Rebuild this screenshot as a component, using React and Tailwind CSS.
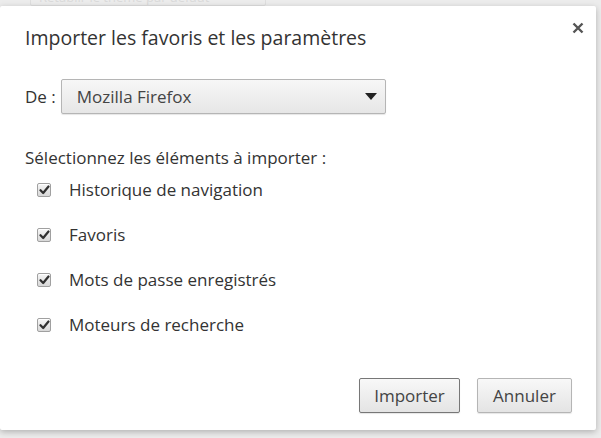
const items = [
  "Historique de navigation",
  "Favoris",
  "Mots de passe enregistrés",
  "Moteurs de recherche",
];

function Check() {
  return (
    <span className="flex h-[14px] w-[14px] items-center justify-center rounded-[2px] border border-[#a0a0a0] bg-gradient-to-b from-[#f6f6f6] to-[#d8d8d8] shadow-[inset_0_1px_0_#fff]">
      <svg width="11" height="10" viewBox="0 0 11 10">
        <path d="M1.5 5.2 L4.2 8 L9.5 1.5" fill="none" stroke="#303030" strokeWidth="2.2" strokeLinecap="round" strokeLinejoin="round" />
      </svg>
    </span>
  );
}

export default function App() {
  return (
    <div className="h-[438px] w-[601px] overflow-hidden bg-[#ececec] font-['Open_Sans',sans-serif] text-[#333]">
      {/* faded page behind the dialog */}
      <div className="h-[6px] overflow-hidden pl-[30px]">
        <div className="-mt-[12px] w-[236px] rounded-[2px] border border-[#dedede] px-2 text-[13px] leading-[16px] text-[#dadada]">
          Rétablir le thème par défaut
        </div>
      </div>

      <div className="relative flex h-[424px] w-[596px] flex-col rounded-[2px] bg-white pl-[25px] pr-[24px] shadow-[0_2px_6px_rgba(0,0,0,0.25)]">
        <button className="absolute right-[12px] top-[16px] text-[#555]">
          <svg width="12" height="12" viewBox="0 0 12 12">
            <path d="M1.5 1.5 L10.5 10.5 M10.5 1.5 L1.5 10.5" stroke="#555" strokeWidth="2.4" />
          </svg>
        </button>

        <h1 className="mt-[19px] text-[19.5px] leading-[26px] text-[#333]">
          Importer les favoris et les paramètres
        </h1>

        <div className="mt-[28px] flex items-center gap-[5px] text-[17px]">
          <span>De :</span>
          <div className="flex h-[35px] w-[325px] items-center justify-between rounded-[2px] border border-[#b5b5b5] bg-gradient-to-b from-[#f7f7f7] to-[#e6e6e6] pl-[15px] pr-[8px] shadow-[0_1px_1px_rgba(0,0,0,0.1)]">
            <span className="text-[17px] text-[#444]">Mozilla Firefox</span>
            <svg width="12" height="7" viewBox="0 0 12 7">
              <path d="M0 0 H12 L6 7 Z" fill="#222" />
            </svg>
          </div>
        </div>

        <p className="mt-[33px] text-[17px] leading-[22px]">
          Sélectionnez les éléments à importer :
        </p>

        <div className="mt-[11px] flex flex-col gap-[25px] pl-[12px]">
          {items.map((label) => (
            <label key={label} className="flex h-[20px] items-center gap-[18px] text-[17px] text-[#333]">
              <Check />
              <span>{label}</span>
            </label>
          ))}
        </div>

        <div className="mt-auto mb-[17px] flex justify-end gap-[17px]">
          <button className="h-[35px] w-[101px] rounded-[2px] border border-[#777] bg-gradient-to-b from-[#f8f8f8] to-[#e4e4e4] text-[17px] text-[#444] shadow-[0_1px_1px_rgba(0,0,0,0.1)]">
            Importer
          </button>
          <button className="h-[35px] w-[95px] rounded-[2px] border border-[#b5b5b5] bg-gradient-to-b from-[#f8f8f8] to-[#e4e4e4] text-[17px] text-[#444] shadow-[0_1px_1px_rgba(0,0,0,0.1)]">
            Annuler
          </button>
        </div>
      </div>
    </div>
  );
}
